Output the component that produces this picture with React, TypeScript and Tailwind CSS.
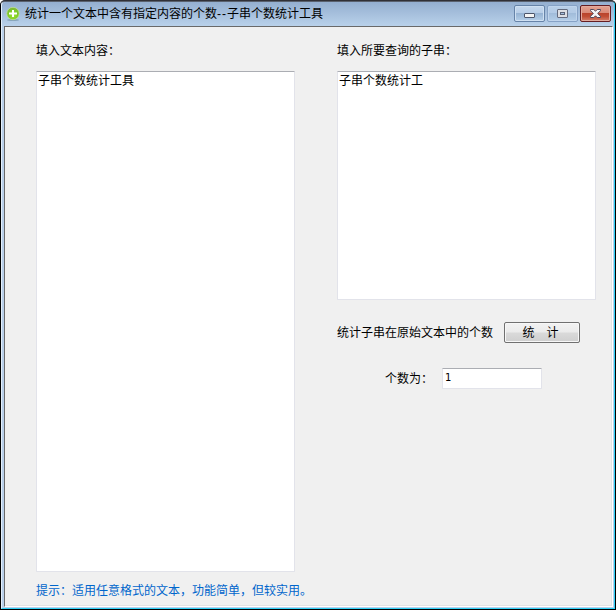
import type { ReactNode } from 'react';

function AppIcon() {
  return (
    <svg width="14" height="14" viewBox="0 0 14 14" className="shrink-0">
      <defs>
        <radialGradient id="leaf" cx="0.5" cy="0.65" r="0.6">
          <stop offset="0" stopColor="#9ee42f" />
          <stop offset="0.7" stopColor="#7cc828" />
          <stop offset="1" stopColor="#7fb53c" />
        </radialGradient>
      </defs>
      <ellipse cx="7" cy="13" rx="6" ry="1" fill="#6d8ca0" opacity="0.6" />
      <circle cx="7" cy="6.5" r="6.200" fill="url(#leaf)" stroke="#c5e69a" strokeWidth="0.7" />
      <path d="M6 3h2v2.500h3v2H8V10H6V7.500H3v-2h3z" fill="#fff" />
    </svg>
  );
}

function CaptionButton({ className, label, children }: { className: string; label: string; children: ReactNode }) {
  return (
    <button aria-label={label} className={`flex h-[17px] items-center justify-center rounded-[2px] border ${className}`}>
      {children}
    </button>
  );
}

function TitleBar() {
  return (
    <header className="flex h-[24px] shrink-0 rounded-t-[4px] bg-linear-to-b from-[#94afd0] to-[#b9d1ea] pl-[4px] pr-[3px]">
      <div className="flex flex-1 items-center gap-[5px] pb-px">
        <AppIcon />
        <h1 className="whitespace-nowrap text-[12px] leading-4">
          统计一个文本中含有指定内容的个数<span className="inline-block w-[10px] tracking-[1px]">--</span>子串个数统计工具
        </h1>
      </div>
      <div className="flex gap-[2px] pt-[3px]">
        <CaptionButton
          label="最小化"
          className="w-[31px] border-[#6683a8] bg-[linear-gradient(#c5d8ee_0%,#b7cde7_48%,#96b3d3_50%,#b5cfe9_100%)] shadow-[inset_0_0_0_1px_#cfe0f2]"
        >
          <svg width="11" height="5" viewBox="0 0 11 5" className="mt-[4px]">
            <rect x="0.5" y="0.5" width="10" height="4" rx="0.5" fill="#f4f4f4" stroke="#4d566b" />
          </svg>
        </CaptionButton>
        <CaptionButton
          label="最大化"
          className="w-[31px] border-[#86a2c6] bg-[linear-gradient(#b9cfe8_0%,#b2cae5_48%,#a1bcda_50%,#b4cee8_100%)] shadow-[inset_0_0_0_1px_#bfd4ec]"
        >
          <svg width="11" height="9" viewBox="0 0 11 9">
            <rect x="0.5" y="0.5" width="10" height="8" rx="0.5" fill="#dcdee3" stroke="#646b7e" />
            <rect x="3.500" y="3.500" width="4" height="2" fill="#a4bedd" stroke="#5b6377" />
          </svg>
        </CaptionButton>
        <CaptionButton
          label="关闭"
          className="w-[31px] border-[#651d22] bg-[linear-gradient(#e4a292_0%,#d98a78_46%,#b9432b_48%,#c14e35_70%,#d5806b_100%)] shadow-[inset_0_0_0_1px_#e2aa9d]"
        >
          <svg width="11" height="9" viewBox="0 0 11 9">
            <path
              d="M.5.5h3.300l1.700 1.700L7.200.5h3.300v1.200L7.700 4.500l2.800 2.800v1.200H7.200L5.500 6.800 3.800 8.500H.5V7.300l2.800-2.800L.5 1.700z"
              fill="#f5f5f5"
              stroke="#50485a"
              strokeWidth="1"
            />
          </svg>
        </CaptionButton>
      </div>
    </header>
  );
}

const field =
  'block resize-none rounded-[1px] border border-[#e2e3ea] border-t-[#abadb3] bg-white outline-none';

export default function App() {
  return (
    <div lang="zh-CN" className="h-[610px] w-[616px] bg-white font-['Liberation_Sans','Noto_Sans_CJK_SC',sans-serif] text-[12px] leading-4 text-black">
      <div className="flex h-full flex-col rounded-t-[5px] border border-black border-t-[#303036] bg-black">
        <div className="flex min-h-0 flex-1 flex-col rounded-t-[4px] border border-b-[#2fd0f5] border-l-[#e4f0fb] border-r-[#2fd0f5] border-t-[#59616e] bg-[#bad0ea]">
          <TitleBar />
          <div className="mb-px ml-[2px] mr-px flex min-h-0 flex-1 border border-b-white border-l-[#696969] border-r-white border-t-[#696969]">
            <main className="flex flex-1 gap-[42px] border-b border-r border-[#e3e3e3] bg-[#f0f0f0] pl-[31px]">
              <section className="w-[259px] shrink-0 pt-[16px]">
                <label htmlFor="source" className="block h-4">填入文本内容：</label>
                <textarea
                  id="source"
                  spellCheck={false}
                  defaultValue="子串个数统计工具"
                  className={`${field} mt-[12px] h-[501px] w-[259px] px-[1px] py-px`}
                />
                <p className="mt-[11px] h-4 whitespace-nowrap text-[#0066cc]">提示：适用任意格式的文本，功能简单，但较实用。</p>
              </section>
              <section className="w-[259px] shrink-0 pt-[16px]">
                <label htmlFor="needle" className="block h-4">填入所要查询的子串：</label>
                <textarea
                  id="needle"
                  spellCheck={false}
                  defaultValue="子串个数统计工"
                  className={`${field} mt-[12px] h-[229px] w-[259px] px-[1px] py-px`}
                />
                <div className="mt-[22px] flex items-center gap-[11px]">
                  <span>统计子串在原始文本中的个数</span>
                  <button className="flex h-[21px] w-[76px] items-center justify-center gap-[12px] rounded-[2px] border border-[#707070] bg-[linear-gradient(#f2f2f2_0%,#ebebeb_48%,#dadada_52%,#cfcfcf_100%)] pr-[3px] shadow-[inset_0_0_0_1px_#f7f7f7]">
                    <span>统</span>
                    <span>计</span>
                  </button>
                </div>
                <div className="mt-[25px] flex items-center pl-[48px]">
                  <label htmlFor="count" className="w-[57px]">个数为：</label>
                  <input
                    id="count"
                    defaultValue="1"
                    className={`${field} h-[21px] w-[100px] px-[2px] pb-[3px] font-['DejaVu_Sans',sans-serif] text-[10px]`}
                  />
                </div>
              </section>
            </main>
          </div>
        </div>
      </div>
    </div>
  );
}
